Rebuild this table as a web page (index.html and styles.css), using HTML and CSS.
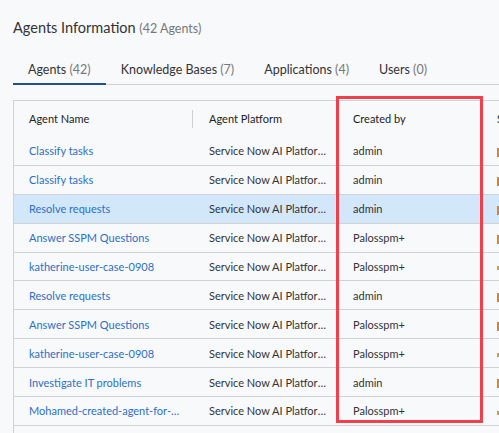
FILE: index.html
```html
<!DOCTYPE html>
<html>
<head>
<meta charset="utf-8">
<link rel="stylesheet" href="styles.css">
</head>
<body>
<div class="page">
  <h1 class="title">Agents Information <span class="count">(42 Agents)</span></h1>
  <div class="tabs">
    <div class="tab active">Agents <span class="num">(42)</span></div>
    <div class="tab">Knowledge Bases <span class="num">(7)</span></div>
    <div class="tab">Applications <span class="num">(4)</span></div>
    <div class="tab">Users <span class="num">(0)</span></div>
    <div class="tab-fill"></div>
  </div>
  <div class="table-wrap">
    <div class="table">
      <div class="row head">
        <div class="cell c1 sep">Agent Name</div>
        <div class="cell c2">Agent Platform</div>
        <div class="cell c3">Created by</div>
        <div class="cell c4">Status</div>
      </div>
      <div class="row"><div class="cell c1 link">Classify tasks</div><div class="cell c2">Service Now AI Platform</div><div class="cell c3">admin</div><div class="cell c4"><span class="mark"></span></div></div>
      <div class="row line"><div class="cell c1 link">Classify tasks</div><div class="cell c2">Service Now AI Platform</div><div class="cell c3">admin</div><div class="cell c4"><span class="mark"></span></div></div>
      <div class="row line sel"><div class="cell c1 link">Resolve requests</div><div class="cell c2">Service Now AI Platform</div><div class="cell c3">admin</div><div class="cell c4"><span class="mark"></span></div></div>
      <div class="row line"><div class="cell c1 link">Answer SSPM Questions</div><div class="cell c2">Service Now AI Platform</div><div class="cell c3">Palosspm+</div><div class="cell c4"><span class="mark"></span></div></div>
      <div class="row line"><div class="cell c1 link">katherine-user-case-0908</div><div class="cell c2">Service Now AI Platform</div><div class="cell c3">Palosspm+</div><div class="cell c4"><span class="mark alt"></span></div></div>
      <div class="row line"><div class="cell c1 link">Resolve requests</div><div class="cell c2">Service Now AI Platform</div><div class="cell c3">admin</div><div class="cell c4"><span class="mark"></span></div></div>
      <div class="row line"><div class="cell c1 link">Answer SSPM Questions</div><div class="cell c2">Service Now AI Platform</div><div class="cell c3">Palosspm+</div><div class="cell c4"><span class="mark"></span></div></div>
      <div class="row line"><div class="cell c1 link">katherine-user-case-0908</div><div class="cell c2">Service Now AI Platform</div><div class="cell c3">Palosspm+</div><div class="cell c4"><span class="mark alt"></span></div></div>
      <div class="row line"><div class="cell c1 link">Investigate IT problems</div><div class="cell c2">Service Now AI Platform</div><div class="cell c3">admin</div><div class="cell c4"><span class="mark"></span></div></div>
      <div class="row line"><div class="cell c1 link">Mohamed-created-agent-for-testing</div><div class="cell c2">Service Now AI Platform</div><div class="cell c3">Palosspm+</div><div class="cell c4"><span class="mark alt"></span></div></div>
      <div class="row line"></div>
    </div>
    <div class="highlight"></div>
  </div>
</div>
</body>
</html>
```

FILE: styles.css
```css
* { box-sizing: border-box; }
html, body { margin: 0; padding: 0; }
body {
  background: #f8f9fb;
  font-family: Lato, "Open Sans", sans-serif;
  color: #333;
  width: 499px;
  height: 433px;
  overflow: hidden;
}
.page { padding: 17px 0 0 13px; }
.title {
  margin: 0;
  height: 20px;
  font-size: 14.5px;
  font-weight: 400;
  color: #333;
  line-height: 21px;
  white-space: nowrap;
}
.count { font-size: 12.5px; color: #777; }
.tabs {
  display: flex;
  margin-top: 23px;
}
.tab {
  padding: 0 15px 5px;
  font-size: 12.5px;
  line-height: 20px;
  height: 25px;
  color: #333;
  border-bottom: 1px solid #cfd2d6;
  white-space: nowrap;
}
.tab.active {
  padding-bottom: 3px;
  border-bottom: 2px solid #1d4f91;
}
.num { color: #777; }
.tab-fill { flex: 1; height: 25px; border-bottom: 1px solid #cfd2d6; }
.table-wrap {
  position: relative;
  margin-top: 15px;
}
.table {
  border-top: 1px solid #cfd2d6;
  border-left: 1px solid #cfd2d6;
  width: 620px;
}
.row {
  display: flex;
  height: 28.9px;
  align-items: center;
  font-size: 11px;
}
.row.head { height: 35px; padding-bottom: 1px; color: #222; }
.row.line { border-top: 1px solid #cfd2d6; }
.row.sel { background: #d3e7fa; }
.cell {
  flex-shrink: 0;
  white-space: nowrap;
  overflow: hidden;
  text-overflow: ellipsis;
  padding: 0 8px 0 16px;
  position: relative;
  line-height: 15px;
}
.c1 { width: 179px; padding-left: 15px; padding-right: 12px; }
.c2 { width: 144px; padding-right: 11px; }
.c3 { width: 144px; }
.c4 { width: 144px; }
.sep { overflow: visible; }
.sep::after {
  content: "";
  position: absolute;
  right: 0;
  top: -1px;
  height: 18px;
  width: 1px;
  background: #cfd2d6;
}
.link { color: #2d6fc4; }
.mark {
  display: inline-block;
  width: 6px;
  height: 9px;
  background: #d9822b;
  vertical-align: middle;
}
.mark.alt { background: #c9a040; height: 4px; }
.highlight {
  position: absolute;
  left: 323px;
  top: -4px;
  width: 147px;
  height: 327px;
  border: 3px solid #f2404a;
}
```
